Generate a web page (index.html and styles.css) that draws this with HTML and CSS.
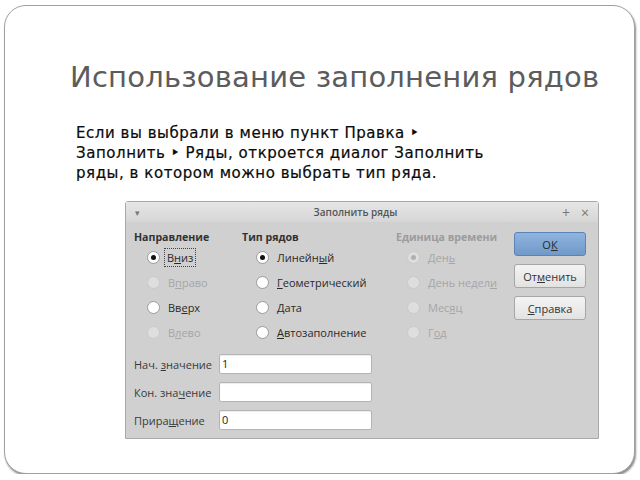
FILE: index.html
```html
<!DOCTYPE html>
<html lang="ru">
<head>
<meta charset="utf-8">
<title>Использование заполнения рядов</title>
<link rel="stylesheet" href="styles.css">
</head>
<body>
<div class="slide">
  <h1 class="title">Использование заполнения рядов</h1>
  <p class="text">Если вы выбрали в меню пункт Правка ‣<br>Заполнить ‣ Ряды, откроется диалог Заполнить<br>ряды, в котором можно выбрать тип ряда.</p>
  <div class="dialog">
    <div class="titlebar">
      <span class="menu">▾</span>
      <span class="dtitle">Заполнить ряды</span>
      <span class="ctrls"><span>+</span><span>×</span></span>
    </div>
    <div class="dbody">
      <div class="main">
        <div class="groups">
          <div class="group g1">
            <div class="ghead">Направление</div>
            <div class="opt"><span class="radio on"></span><span class="lbl focus">В<u>н</u>из</span></div>
            <div class="opt dis"><span class="radio"></span><span class="lbl">В<u>п</u>раво</span></div>
            <div class="opt"><span class="radio"></span><span class="lbl">Вв<u>е</u>рх</span></div>
            <div class="opt dis"><span class="radio"></span><span class="lbl">В<u>л</u>ево</span></div>
          </div>
          <div class="group g2">
            <div class="ghead">Тип рядов</div>
            <div class="opt"><span class="radio on"></span><span class="lbl">Линейн<u>ы</u>й</span></div>
            <div class="opt"><span class="radio"></span><span class="lbl"><u>Г</u>еометрический</span></div>
            <div class="opt"><span class="radio"></span><span class="lbl"><u>Д</u>ата</span></div>
            <div class="opt"><span class="radio"></span><span class="lbl"><u>А</u>втозаполнение</span></div>
          </div>
          <div class="group g3 dis">
            <div class="ghead">Единица времени</div>
            <div class="opt"><span class="radio on"></span><span class="lbl">Ден<u>ь</u></span></div>
            <div class="opt"><span class="radio"></span><span class="lbl">День недел<u>и</u></span></div>
            <div class="opt"><span class="radio"></span><span class="lbl">Мес<u>я</u>ц</span></div>
            <div class="opt"><span class="radio"></span><span class="lbl">Г<u>о</u>д</span></div>
          </div>
        </div>
        <div class="fields">
          <div class="frow"><span class="flbl">Нач. <u>з</u>начение</span><span class="input">1</span></div>
          <div class="frow"><span class="flbl">Кон. зна<u>ч</u>ение</span><span class="input"></span></div>
          <div class="frow"><span class="flbl">Прира<u>щ</u>ение</span><span class="input">0</span></div>
        </div>
      </div>
      <div class="buttons">
        <div class="btn primary">О<u>К</u></div>
        <div class="btn">От<u>м</u>енить</div>
        <div class="btn"><u>С</u>правка</div>
      </div>
    </div>
  </div>
</div>
</body>
</html>
```

FILE: styles.css
```css
html, body {
  margin: 0;
  padding: 0;
  background: #ffffff;
}

.slide {
  box-sizing: border-box;
  width: 631px;
  height: 469px;
  margin: 5px 0 0 4px;
  border: 1px solid #a0a0a0;
  border-radius: 22px;
  box-shadow: 1px 2px 2px rgba(0, 0, 0, 0.45);
  padding-top: 54px;
  background: #ffffff;
}

.title {
  margin: 0 0 0 65px;
  font-family: "DejaVu Sans", sans-serif;
  font-weight: normal;
  font-size: 29px;
  line-height: 34px;
  letter-spacing: 0.2px;
  color: #5c5c5c;
}

.text {
  margin: 29px 0 0 71px;
  font-family: "DejaVu Sans", sans-serif;
  font-size: 15px;
  line-height: 20px;
  color: #0a0a0a;
  letter-spacing: 0.55px;
  -webkit-text-stroke: 0.2px #0a0a0a;
}

.dialog {
  box-sizing: border-box;
  width: 474px;
  margin: 18px 0 0 120px;
  border: 1px solid #a8a8a8;
  border-radius: 3px 3px 0 0;
  background: #d0d0d0;
  font-family: "Open Sans", sans-serif;
  font-size: 11px;
  color: #333333;
}

.titlebar {
  height: 20px;
  display: flex;
  align-items: center;
  background: linear-gradient(#e6e6e6, #d6d6d6);
  color: #666666;
  padding: 0 9px 0 9px;
}

.menu {
  font-size: 9px;
  width: 20px;
  color: #777777;
}

.dtitle {
  flex: 1;
  text-align: center;
  font-size: 10px;
  font-weight: 600;
  color: #555555;
  padding-right: 6px;
}

.ctrls {
  display: flex;
  gap: 11px;
  font-size: 14px;
  color: #777777;
}

.dbody {
  display: flex;
  padding: 7px 11px 4px 8px;
}

.main {
  width: 380px;
}

.groups {
  display: flex;
}

.group {
  display: flex;
  flex-direction: column;
}

.g1 { width: 108px; }
.g2 { width: 154px; }
.g3 { width: 118px; }

.ghead {
  height: 16px;
  line-height: 16px;
  font-weight: bold;
  font-size: 10.6px;
  color: #333333;
  white-space: nowrap;
}

.g3 .ghead {
  color: #9c9c9c;
}

.opt {
  height: 25px;
  display: flex;
  align-items: center;
  padding-left: 13px;
  color: #2a2a2a;
}

.g2 .opt { padding-left: 14px; }
.g3 .opt { padding-left: 11px; }

.radio {
  box-sizing: border-box;
  width: 13px;
  height: 13px;
  border-radius: 50%;
  border: 1px solid #9a9a9a;
  background: #ffffff;
  margin-right: 8px;
  display: flex;
  align-items: center;
  justify-content: center;
  flex: none;
}

.radio.on::after {
  content: "";
  width: 5px;
  height: 5px;
  border-radius: 50%;
  background: #111111;
}

.dis .radio,
.opt.dis .radio {
  border-color: #cacaca;
  background: #dedede;
}

.dis .radio.on::after {
  background: #b0b0b0;
}

.dis .lbl,
.opt.dis .lbl {
  color: #a6a6a6;
}

.lbl {
  white-space: nowrap;
}

.lbl.focus {
  outline: 1px dotted #444444;
  outline-offset: 0;
  padding: 1px 2px;
  margin-left: -3px;
}

.fields {
  margin-top: 5px;
}

.frow {
  height: 28px;
  display: flex;
  align-items: center;
}

.flbl {
  width: 85px;
  color: #3a3a3a;
  white-space: nowrap;
}

.input {
  box-sizing: border-box;
  width: 153px;
  height: 20px;
  background: #ffffff;
  border: 1px solid #b4b4b4;
  border-radius: 2px;
  box-shadow: inset 0 1px 1px rgba(0, 0, 0, 0.08);
  padding-left: 2px;
  line-height: 18px;
  color: #222222;
}

.buttons {
  display: flex;
  flex-direction: column;
  gap: 8px;
  margin-top: 3px;
}

.btn {
  box-sizing: border-box;
  width: 72px;
  height: 24px;
  display: flex;
  align-items: center;
  justify-content: center;
  border: 1px solid #a6a6a6;
  border-radius: 3px;
  background: linear-gradient(#f4f4f4, #e2e2e2);
  color: #333333;
}

.btn.primary {
  border-color: #5b84b6;
  background: linear-gradient(#8fb4df, #7099c9);
  color: #2a2a2a;
}
```
